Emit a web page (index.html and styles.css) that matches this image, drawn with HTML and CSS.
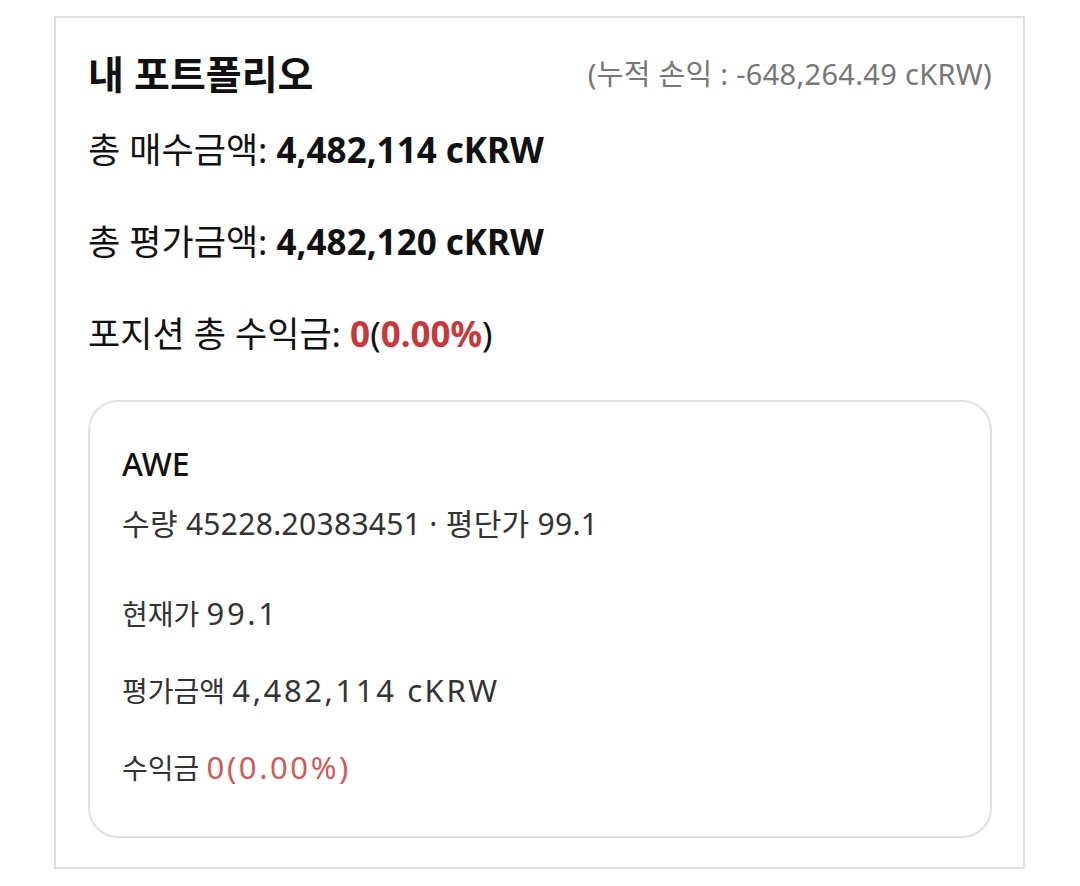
FILE: index.html
```html
<!DOCTYPE html>
<html lang="ko">
<head>
    <meta charset="utf-8">
    <title>내 포트폴리오</title>
    <link rel="stylesheet" href="styles.css">
</head>
<body>
<div class="portfolio">
    <div class="head">
        <div class="head-title">내 포트폴리오</div>
        <div class="head-pnl">(누적 손익 : -648,264.49 cKRW)</div>
    </div>
    <div class="sum-row">총 매수금액: <b>4,482,114 cKRW</b></div>
    <div class="sum-row">총 평가금액: <b>4,482,120 cKRW</b></div>
    <div class="sum-row">포지션 총 수익금: <b class="red">0</b>(<b class="red">0.00%</b>)</div>

    <div class="coin">
        <div class="coin-name">AWE</div>
        <div class="coin-sub">수량 45228.20383451 · 평단가 99.1</div>
        <div class="coin-row first">현재가 <span class="val">99.1</span></div>
        <div class="coin-row">평가금액 <span class="val">4,482,114 cKRW</span></div>
        <div class="coin-row">수익금 <span class="val red-l">0(0.00%)</span></div>
    </div>
</div>
</body>
</html>
```

FILE: styles.css
```css
body {
    margin: 0;
    background: #fff;
    font-family: "Noto Sans", "Noto Sans CJK KR", sans-serif;
    color: #111;
}
.portfolio {
    margin: 16px 0 0 54px;
    width: 971px;
    height: 853px;
    box-sizing: border-box;
    border: 2px solid #dedede;
    padding: 32px 31px 0 32px;
}
.head {
    display: flex;
    justify-content: space-between;
    align-items: center;
    height: 48px;
}
.head-title {
    font-size: 39px;
    font-weight: 700;
    line-height: 48px;
}
.head-pnl {
    font-size: 29px;
    letter-spacing: 0.3px;
    color: #777;
    margin-top: -4px;
}
.sum-row {
    font-size: 35px;
    line-height: 44px;
    margin-top: 30px;
}
.sum-row + .sum-row {
    margin-top: 48px;
}
.sum-row b {
    font-weight: 700;
}
.red {
    color: #c8383a;
}
.coin {
    margin-top: 44px;
    border: 2px solid #e0e0e0;
    border-radius: 30px;
    padding: 42px 32px 48px;
    color: #333;
}
.coin-name {
    font-size: 32px;
    font-weight: 500;
    line-height: 40px;
    color: #111;
}
.coin-sub {
    font-size: 30px;
    letter-spacing: 0.3px;
    line-height: 36px;
    margin-top: 22px;
}
.coin-row {
    font-size: 28px;
    line-height: 40px;
    margin-top: 37px;
}
.coin-row.first {
    margin-top: 52px;
}
.coin-row .val {
    font-size: 31px;
    line-height: 1;
    letter-spacing: 2.6px;
}
.red-l {
    color: #cf5a5a;
}
```
